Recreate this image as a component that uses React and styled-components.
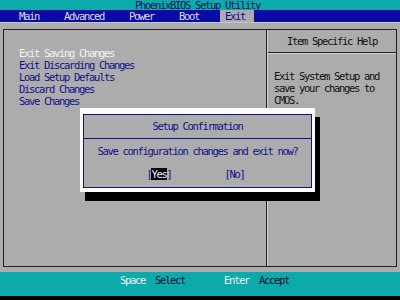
import React from 'react';
import styled, { createGlobalStyle } from 'styled-components';

const GlobalStyle = createGlobalStyle`
  html, body {
    margin: 0;
    padding: 0;
    background: #000;
  }
  body {
    font-family: "DejaVu Sans Mono", "Liberation Mono", monospace;
    font-size: 10.5px;
    letter-spacing: -1.32px;
  }
`;

const exitItems = [
  'Exit Saving Changes',
  'Exit Discarding Changes',
  'Load Setup Defaults',
  'Discard Changes',
  'Save Changes',
];

const menus = ['Main', 'Advanced', 'Power', 'Boot', 'Exit'];

export default function App() {
  return (
    <Screen>
      <GlobalStyle />
      <TitleBar>PhoenixBIOS Setup Utility</TitleBar>
      <MenuBar>
        {menus.map(m => (
          <MenuItem key={m} active={m === 'Exit'}>{m}</MenuItem>
        ))}
      </MenuBar>
      <Body>
        <Frame>
          <LeftPanel>
            {exitItems.map((item, i) => (
              <Option key={item} selected={i === 0}>{item}</Option>
            ))}
          </LeftPanel>
          <HelpPanel>
            <HelpHeader>Item Specific Help</HelpHeader>
            <HelpText>
              Exit System Setup and<br />
              save your changes to<br />
              CMOS.
            </HelpText>
          </HelpPanel>
        </Frame>
        <Dialog>
          <DialogInner>
            <DialogTitle>Setup Confirmation</DialogTitle>
            <Message>Save configuration changes and exit now?</Message>
            <Buttons>
              <span>[<Chosen>Yes</Chosen>]</span>
              <span>[No]</span>
            </Buttons>
          </DialogInner>
        </Dialog>
      </Body>
      <KeyBar>
        <Key>Space</Key>
        <Action>Select</Action>
        <Key>Enter</Key>
        <Action>Accept</Action>
      </KeyBar>
    </Screen>
  );
}

const Screen = styled.div`
  width: 400px;
  height: 300px;
  display: flex;
  flex-direction: column;
  background: #000;
  overflow: hidden;
`;

const TitleBar = styled.div`
  height: 10px;
  line-height: 10px;
  background: #0caaaa;
  color: #10105a;
  padding-left: 135px;
`;

const MenuBar = styled.div`
  height: 12px;
  background: #0a0aa4;
  display: flex;
  gap: 17px;
  padding-left: 15px;
  border-bottom: 1px solid #c8c8c8;
`;

const MenuItem = styled.div`
  line-height: 12px;
  padding: 0 ${p => (p.active ? '9px 0 5px' : '4px')};
  background: ${p => (p.active ? '#acacac' : 'transparent')};
  color: ${p => (p.active ? '#0a0aa0' : '#dcdcdc')};
`;

const Body = styled.div`
  position: relative;
  height: 249px;
  background: #acacac;
  padding: 6px 3px 5px 3px;
  box-sizing: border-box;
  display: flex;
`;

const Frame = styled.div`
  flex: 1;
  display: flex;
  border: 1px solid #202020;
`;

const LeftPanel = styled.div`
  width: 263px;
  padding: 17px 0 0 15px;
  box-sizing: border-box;
  border-right: 1px solid #202020;
  display: flex;
  flex-direction: column;
`;

const Option = styled.div`
  line-height: 12px;
  color: ${p => (p.selected ? '#f4f4f4' : '#10108c')};
`;

const HelpPanel = styled.div`
  flex: 1;
  display: flex;
  flex-direction: column;
  border-left: 1px solid #d0d0d0;
`;

const HelpHeader = styled.div`
  height: 22px;
  line-height: 22px;
  text-align: center;
  color: #101010;
  border-bottom: 1px solid #202020;
  box-shadow: 0 1px 0 #d0d0d0;
`;

const HelpText = styled.div`
  padding: 17px 0 0 6px;
  line-height: 12px;
  color: #101010;
`;

const Dialog = styled.div`
  position: absolute;
  left: 80px;
  top: 85px;
  width: 235px;
  background: #fcfcfc;
  padding: 6px 3px 4px 3px;
  box-sizing: border-box;
  box-shadow: 5px 9px 0 #000;
`;

const DialogInner = styled.div`
  background: #acacac;
  border: 1px solid #10108c;
  color: #10108c;
  padding-bottom: 7px;
`;

const DialogTitle = styled.div`
  height: 23px;
  line-height: 22px;
  text-align: center;
  border-bottom: 1px solid #10108c;
`;

const Message = styled.div`
  margin-top: 6px;
  line-height: 12px;
  text-align: center;
`;

const Buttons = styled.div`
  margin-top: 11px;
  display: flex;
  justify-content: center;
  gap: 53px;
  line-height: 12px;
  padding-right: 4px;
`;

const Chosen = styled.span`
  background: #000;
  color: #f4f4f4;
`;

const KeyBar = styled.div`
  height: 24px;
  background: #0caaaa;
  display: flex;
  align-items: flex-start;
  padding: 2px 0 0 120px;
  box-sizing: border-box;
  line-height: 12px;
`;

const Key = styled.span`
  color: #f0f0f0;
  margin-right: 10px;
`;

const Action = styled.span`
  color: #101030;
  margin-right: 39px;
`;
